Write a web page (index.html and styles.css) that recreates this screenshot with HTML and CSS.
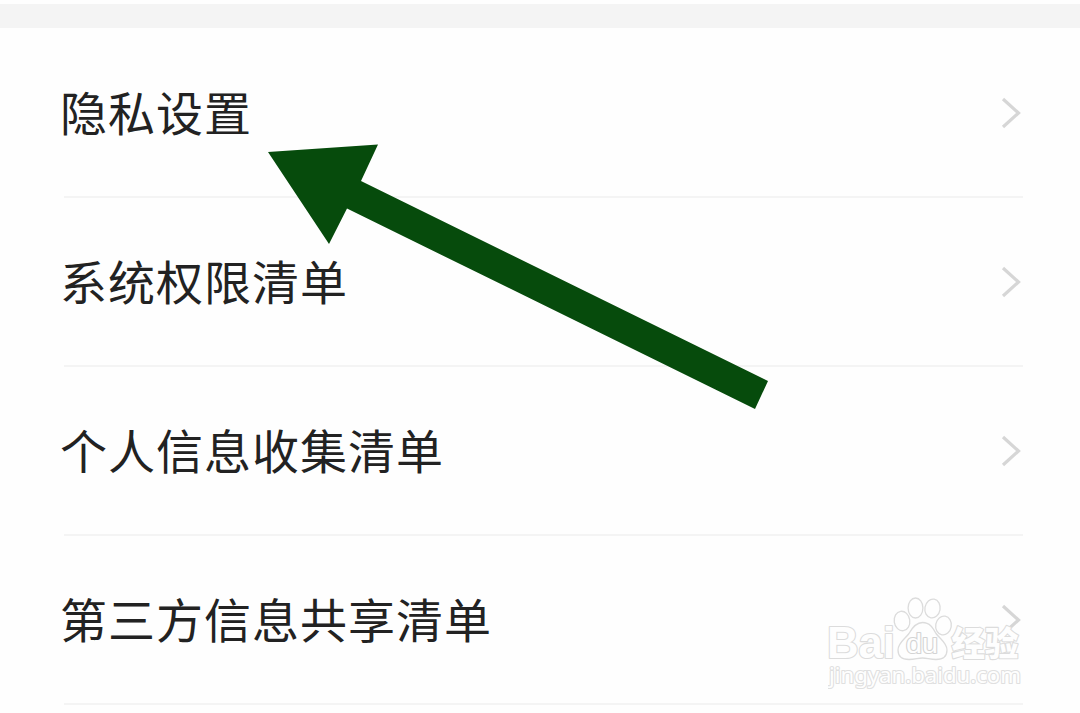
FILE: index.html
```html
<!DOCTYPE html>
<html lang="zh-CN">
<head>
    <meta charset="UTF-8">
    <meta name="viewport" content="width=device-width, initial-scale=1.0">
    <title>隐私</title>
    <link rel="stylesheet" href="styles.css">
</head>
<body>

    <div class="divider"></div>

    <!-- 设置列表 -->
    <ul class="list">
        <li class="item">
            <span class="label">隐私设置</span>
            <svg class="chevron" viewBox="0 0 20 32"><path d="M2 2 L17.5 16 L2 30"/></svg>
        </li>
        <li class="item">
            <span class="label">系统权限清单</span>
            <svg class="chevron" viewBox="0 0 20 32"><path d="M2 2 L17.5 16 L2 30"/></svg>
        </li>
        <li class="item">
            <span class="label">个人信息收集清单</span>
            <svg class="chevron" viewBox="0 0 20 32"><path d="M2 2 L17.5 16 L2 30"/></svg>
        </li>
        <li class="item">
            <span class="label">第三方信息共享清单</span>
            <svg class="chevron" viewBox="0 0 20 32"><path d="M2 2 L17.5 16 L2 30"/></svg>
        </li>
    </ul>

    <!-- 箭头标注 -->
    <svg class="arrow" viewBox="0 0 500 266">
        <polygon points="0,8 110,0.500 93,37 500,237 487,265 79,64.500 61,100"/>
    </svg>

    <!-- 水印 -->
    <svg class="watermark" viewBox="0 0 210 104">
        <ellipse cx="74" cy="31" rx="7.8" ry="9.8" transform="rotate(-8 74 31)"/>
        <ellipse cx="87.500" cy="18" rx="7.4" ry="10"/>
        <ellipse cx="104.500" cy="18.500" rx="7.6" ry="9.500" transform="rotate(10 104.500 18.500)"/>
        <ellipse cx="115.500" cy="35.500" rx="7.8" ry="9.5" transform="rotate(10 115.500 35.500)"/>
        <path d="M94.500 32.500 C102 32.500 105 38 108 43.500 C112 49 119 53 119 60 C119 67 114 69.500 108 69.500 C102 69.500 99 68 94.500 68 C90 68 87 69.500 81 69.500 C74 69.500 70 66 70 60 C70 53 77 49 81 43.500 C84 38 88 32.500 94.500 32.500 Z"/>
        <text class="brand" x="-1" y="67.500" textLength="68" lengthAdjust="spacingAndGlyphs">Bai</text>
        <text class="du" x="78" y="62.500" textLength="32" lengthAdjust="spacingAndGlyphs">du</text>
        <text class="name" x="123.500" y="65.500" textLength="67" lengthAdjust="spacingAndGlyphs">经验</text>
        <text class="site" x="1" y="93" textLength="192" lengthAdjust="spacingAndGlyphs">jingyan.baidu.com</text>
    </svg>

</body>
</html>
```

FILE: styles.css
```css
body {
    font-family: 'Noto Sans CJK SC', sans-serif;
    margin: 0;
    padding-top: 4px;
    background-color: #fefefe;
    height: 709px;
    overflow: hidden;
    position: relative;
}
.divider {
    height: 24px;
    background-color: #f4f4f4;
}
.list {
    list-style: none;
    margin: 0;
    padding: 1px 57px 0 60px;
}
.item {
    display: flex;
    justify-content: space-between;
    align-items: center;
    box-sizing: border-box;
    height: 169px;
    padding: 0 2px 2px 0;
    background: linear-gradient(#f4f4f4, #f4f4f4) 4px 100% / 100% 2px no-repeat;
}
.label {
    font-size: 47px;
    font-weight: 400;
    letter-spacing: 1px;
    line-height: 60px;
    padding-bottom: 4px;
    color: #222;
}
.chevron {
    width: 20px;
    height: 32px;
    fill: none;
    stroke: #d6d6d6;
    stroke-width: 3.2;
}
.arrow {
    position: absolute;
    left: 268px;
    top: 144px;
    width: 500px;
    height: 266px;
    fill: #064b0c;
}
.watermark {
    position: absolute;
    left: 828px;
    top: 590px;
    width: 210px;
    height: 104px;
    fill: #fefefe;
    stroke: #dcdcdc;
    stroke-width: 1.3;
}
.watermark text {
    paint-order: stroke;
    stroke-width: 2.2;
    stroke-linejoin: round;
}
.brand {
    font: bold 44px 'Liberation Sans', sans-serif;
}
.watermark .du {
    font: 27px 'Liberation Sans', sans-serif;
    stroke: #d4d4d4;
}
.name {
    font: 900 34px 'Noto Sans CJK SC', sans-serif;
}
.watermark .site {
    font: 400 22px 'Noto Sans', sans-serif;
    stroke: #e0e0e0;
}
```
